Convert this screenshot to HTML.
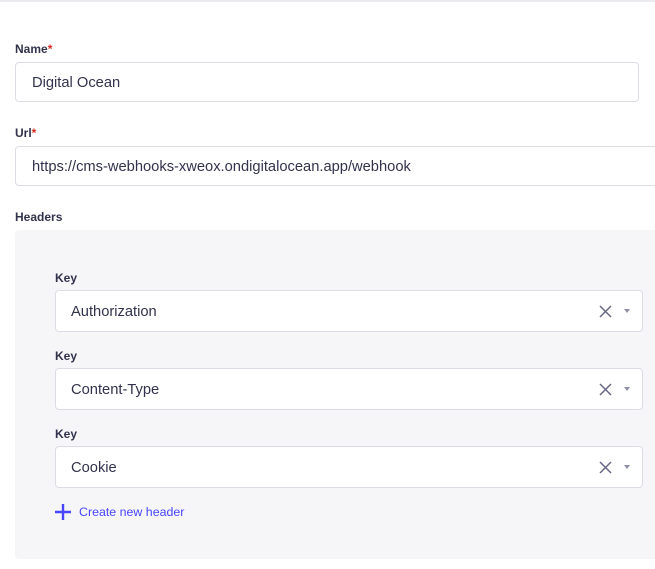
<!DOCTYPE html>
<html><head><style>
body{margin:0;width:655px;height:569px;background:#fff;font-family:"Liberation Sans",sans-serif;position:relative;overflow:hidden;color:#32324d}
.top{position:absolute;left:0;top:0;width:655px;height:2px;background:#eaeaef}
.lbl{position:absolute;font-size:12px;font-weight:bold;color:#32324d}
.lbl b{color:#d02b20}
.in{position:absolute;background:#fff;border:1px solid #dcdce4;border-radius:4px;box-sizing:border-box;font-size:14.7px;color:#32324d;display:flex;align-items:center;padding-top:2px}
.panel{position:absolute;left:15px;top:230px;width:645px;height:329px;background:#f6f6f9;border-radius:4px}
.x{position:absolute;right:30px;top:14px}
.car{position:absolute;right:12px;top:18px;width:0;height:0;border-left:3.5px solid transparent;border-right:3.5px solid transparent;border-top:4px solid #8e8ea9}
</style></head><body>
<div class="top"></div>
<div class="lbl" style="left:15px;top:42px">Name<b>*</b></div>
<div class="in" style="left:15px;top:62px;width:624px;height:40px;padding-left:16px">Digital Ocean</div>
<div class="lbl" style="left:15px;top:126px">Url<b>*</b></div>
<div class="in" style="left:15px;top:146px;width:660px;height:40px;padding-left:16px">https://cms-webhooks-xweox.ondigitalocean.app/webhook</div>
<div class="lbl" style="left:15px;top:210px">Headers</div>
<div class="panel"></div>

<div class="lbl" style="left:55px;top:271px">Key</div>
<div class="in" style="left:55px;top:290px;width:588px;height:42px;padding-left:15px">Authorization
<svg class="x" width="13" height="13" viewBox="0 0 13 13"><path d="M1 1L12 12M12 1L1 12" stroke="#666687" stroke-width="1.5"/></svg><div class="car"></div></div>

<div class="lbl" style="left:55px;top:349px">Key</div>
<div class="in" style="left:55px;top:368px;width:588px;height:42px;padding-left:15px">Content-Type
<svg class="x" width="13" height="13" viewBox="0 0 13 13"><path d="M1 1L12 12M12 1L1 12" stroke="#666687" stroke-width="1.5"/></svg><div class="car"></div></div>

<div class="lbl" style="left:55px;top:427px">Key</div>
<div class="in" style="left:55px;top:446px;width:588px;height:42px;padding-left:15px">Cookie
<svg class="x" width="13" height="13" viewBox="0 0 13 13"><path d="M1 1L12 12M12 1L1 12" stroke="#666687" stroke-width="1.5"/></svg><div class="car"></div></div>

<svg style="position:absolute;left:55px;top:504px" width="16" height="16" viewBox="0 0 16 16"><path d="M8 0V16M0 8H16" stroke="#4945ff" stroke-width="2.4"/></svg>
<div style="position:absolute;left:79px;top:505px;font-size:12.4px;color:#4945ff">Create new header</div>
</body></html>
